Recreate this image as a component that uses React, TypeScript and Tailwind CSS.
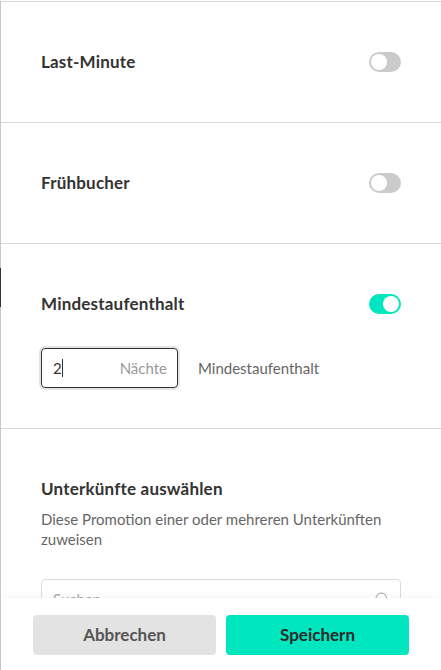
import { Search } from "lucide-react";

function Toggle({ on }: { on: boolean }) {
    return (
        <div className={on ? "w-8 h-5 rounded-full bg-[#00e6be] p-[2px] flex justify-end" : "w-8 h-5 rounded-full bg-[#cbcbcb] p-[2px] flex justify-start"}>
            <div className="w-4 h-4 rounded-full bg-white"></div>
        </div>
    );
}

function ToggleRow({ title, on }: { title: string; on: boolean }) {
    return (
        <div className="h-10 flex items-center justify-between">
            <p className="text-[17px] font-bold tracking-[0.2px] text-[#333]">{title}</p>
            <Toggle on={on} />
        </div>
    );
}

export default function App() {
    return (
        <div className="relative w-[441px] h-[670px] bg-white border-l border-[#c8c8c8]" style={{ fontFamily: "Lato, 'Liberation Sans', sans-serif" }}>
            {/* bit of the page behind the drawer */}
            <div className="absolute left-[-1px] top-[267px] w-px h-[39px] bg-[#333]"></div>

            <div className="mt-px border-t border-[#d9d9d9]">
                <div className="px-10 py-10 border-b border-[#d9d9d9]">
                    <ToggleRow title="Last-Minute" on={false} />
                </div>
                <div className="px-10 py-10 border-b border-[#d9d9d9]">
                    <ToggleRow title="Frühbucher" on={false} />
                </div>
                <div className="px-10 py-10 border-b border-[#d9d9d9]">
                    <ToggleRow title="Mindestaufenthalt" on={true} />
                    <div className="mt-6 flex items-center gap-5">
                        <div className="w-[137px] h-10 rounded-[4px] border border-[#333] shadow-[0_0_0_2px_#e4e4e4] flex items-center justify-between pl-[11px] pr-[10px]">
                            <span className="text-[15px] text-[#333] flex items-center">2<span className="w-px h-[18px] bg-[#333]"></span></span>
                            <span className="text-[15px] text-[#999]">Nächte</span>
                        </div>
                        <span className="text-[15px] text-[#666]">Mindestaufenthalt</span>
                    </div>
                </div>
                <div className="px-10 pt-10">
                    <div className="h-10 flex items-center">
                        <p className="text-[17px] font-bold tracking-[0.2px] text-[#333]">Unterkünfte auswählen</p>
                    </div>
                    <p className="text-[15px] leading-5 text-[#666]">Diese Promotion einer oder mehreren Unterkünften zuweisen</p>
                    <div className="mt-[30px] h-10 rounded-[4px] border border-[#dcdcdc] flex items-center justify-between pl-[11px] pr-[10px]">
                        <span className="text-[15px] text-[#aaa]">Suchen</span>
                        <Search className="w-4 h-4 text-[#999]" strokeWidth={1.5} />
                    </div>
                </div>
            </div>

            <div className="absolute left-0 right-0 bottom-0 h-[73px] bg-white shadow-[0_-3px_6px_rgba(0,0,0,0.03)] pl-8 pr-8 pt-[17px] flex gap-[10px]">
                <button className="w-[183px] h-10 rounded-[4px] bg-[#e3e3e3] text-[17px] font-bold text-[#555]">Abbrechen</button>
                <button className="w-[183px] h-10 rounded-[4px] bg-[#00e6be] text-[17px] font-bold text-[#2b2b2b]">Speichern</button>
            </div>
        </div>
    );
}
